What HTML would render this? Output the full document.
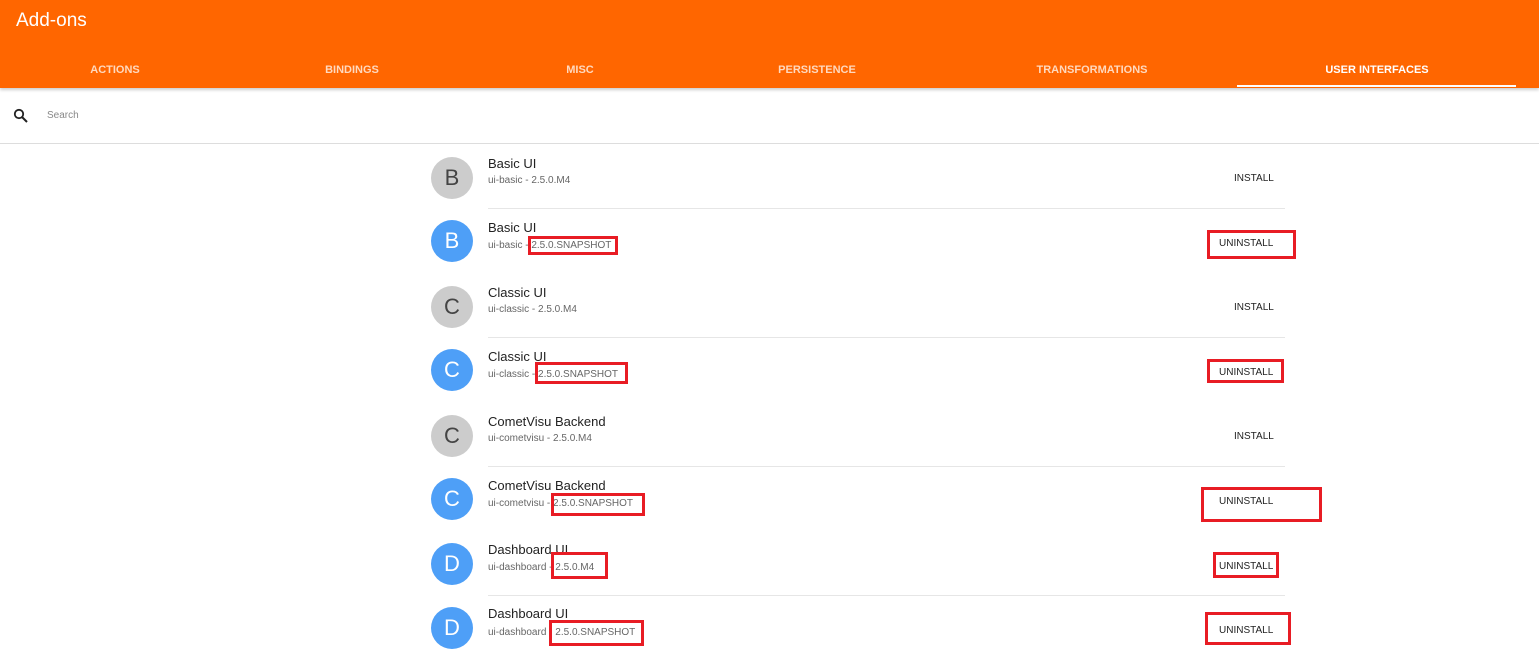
<!DOCTYPE html>
<html><head><meta charset="utf-8"><style>
*{margin:0;padding:0;box-sizing:border-box}
body{width:1539px;height:654px;overflow:hidden;background:#fff;font-family:"Liberation Sans",sans-serif;position:relative}
.hdr{position:absolute;left:0;top:0;width:1539px;height:88px;background:#ff6600;box-shadow:0 2px 3px rgba(0,0,0,.2)}
.title{position:absolute;left:16px;top:10px;font-size:19px;color:#fff}
.tab{position:absolute;top:64px;font-size:11px;font-weight:bold;color:#ffd9bf;transform:translateX(-50%);white-space:nowrap}
.ul{position:absolute;left:1237px;top:85px;width:279px;height:2px;background:#fff}
.sline{position:absolute;left:0;top:143px;width:1539px;height:1px;background:#ddd}
.av{position:absolute;left:431px;width:42px;height:42px;border-radius:50%;color:#fff;font-size:22px;text-align:center;line-height:42px}
.g{background:#cccccc;color:#444}.b{background:#4e9ff7}
.nm{position:absolute;left:488px;font-size:13px;color:#222}
.sub{position:absolute;left:488px;font-size:10px;color:#666}
.btn{position:absolute;font-size:10px;color:#222}
.div{position:absolute;left:488px;width:797px;height:1px;background:#e6e6e6}
.rb{position:absolute;border:3px solid #e81c24}
</style></head><body>
<div class="hdr">
<div class="title">Add-ons</div>
<div class="tab" style="left:115px">ACTIONS</div>
<div class="tab" style="left:352px">BINDINGS</div>
<div class="tab" style="left:580px">MISC</div>
<div class="tab" style="left:817px">PERSISTENCE</div>
<div class="tab" style="left:1092px">TRANSFORMATIONS</div>
<div class="tab" style="left:1377px;color:#fff">USER INTERFACES</div>
<div class="ul"></div>
</div>
<svg style="position:absolute;left:13px;top:108px" width="16" height="16" viewBox="0 0 16 16"><circle cx="6" cy="6" r="4.2" fill="none" stroke="#222" stroke-width="1.8"/><path d="M9 9l5 5" stroke="#222" stroke-width="2"/></svg>
<div style="position:absolute;left:47px;top:110px;font-size:10px;color:#888">Search</div>
<div class="sline"></div>

<div class="av g" style="top:157px">B</div><div class="nm" style="top:156px">Basic UI</div><div class="sub" style="top:175px">ui-basic - 2.5.0.M4</div><div class="btn" style="left:1234px;top:173px">INSTALL</div>
<div class="div" style="top:208px"></div>
<div class="av b" style="top:220px">B</div><div class="nm" style="top:220px">Basic UI</div><div class="sub" style="top:240px">ui-basic - 2.5.0.SNAPSHOT</div><div class="btn" style="left:1219px;top:238px">UNINSTALL</div>
<div class="rb" style="left:528px;top:236px;width:90px;height:19px"></div><div class="rb" style="left:1207px;top:230px;width:89px;height:29px"></div>

<div class="av g" style="top:286px">C</div><div class="nm" style="top:285px">Classic UI</div><div class="sub" style="top:304px">ui-classic - 2.5.0.M4</div><div class="btn" style="left:1234px;top:302px">INSTALL</div>
<div class="div" style="top:337px"></div>
<div class="av b" style="top:349px">C</div><div class="nm" style="top:349px">Classic UI</div><div class="sub" style="top:369px">ui-classic - 2.5.0.SNAPSHOT</div><div class="btn" style="left:1219px;top:367px">UNINSTALL</div>
<div class="rb" style="left:535px;top:362px;width:93px;height:22px"></div><div class="rb" style="left:1207px;top:359px;width:77px;height:24px"></div>

<div class="av g" style="top:415px">C</div><div class="nm" style="top:414px">CometVisu Backend</div><div class="sub" style="top:433px">ui-cometvisu - 2.5.0.M4</div><div class="btn" style="left:1234px;top:431px">INSTALL</div>
<div class="div" style="top:466px"></div>
<div class="av b" style="top:478px">C</div><div class="nm" style="top:478px">CometVisu Backend</div><div class="sub" style="top:498px">ui-cometvisu - 2.5.0.SNAPSHOT</div><div class="btn" style="left:1219px;top:496px">UNINSTALL</div>
<div class="rb" style="left:551px;top:493px;width:94px;height:23px"></div><div class="rb" style="left:1201px;top:487px;width:121px;height:35px"></div>

<div class="av b" style="top:543px">D</div><div class="nm" style="top:542px">Dashboard UI</div><div class="sub" style="top:562px">ui-dashboard - 2.5.0.M4</div><div class="btn" style="left:1219px;top:561px">UNINSTALL</div>
<div class="rb" style="left:551px;top:552px;width:57px;height:27px"></div><div class="rb" style="left:1213px;top:552px;width:66px;height:26px"></div>
<div class="div" style="top:595px"></div>
<div class="av b" style="top:607px">D</div><div class="nm" style="top:606px">Dashboard UI</div><div class="sub" style="top:627px">ui-dashboard - 2.5.0.SNAPSHOT</div><div class="btn" style="left:1219px;top:625px">UNINSTALL</div>
<div class="rb" style="left:549px;top:620px;width:95px;height:26px"></div><div class="rb" style="left:1205px;top:612px;width:86px;height:33px"></div>
</body></html>
